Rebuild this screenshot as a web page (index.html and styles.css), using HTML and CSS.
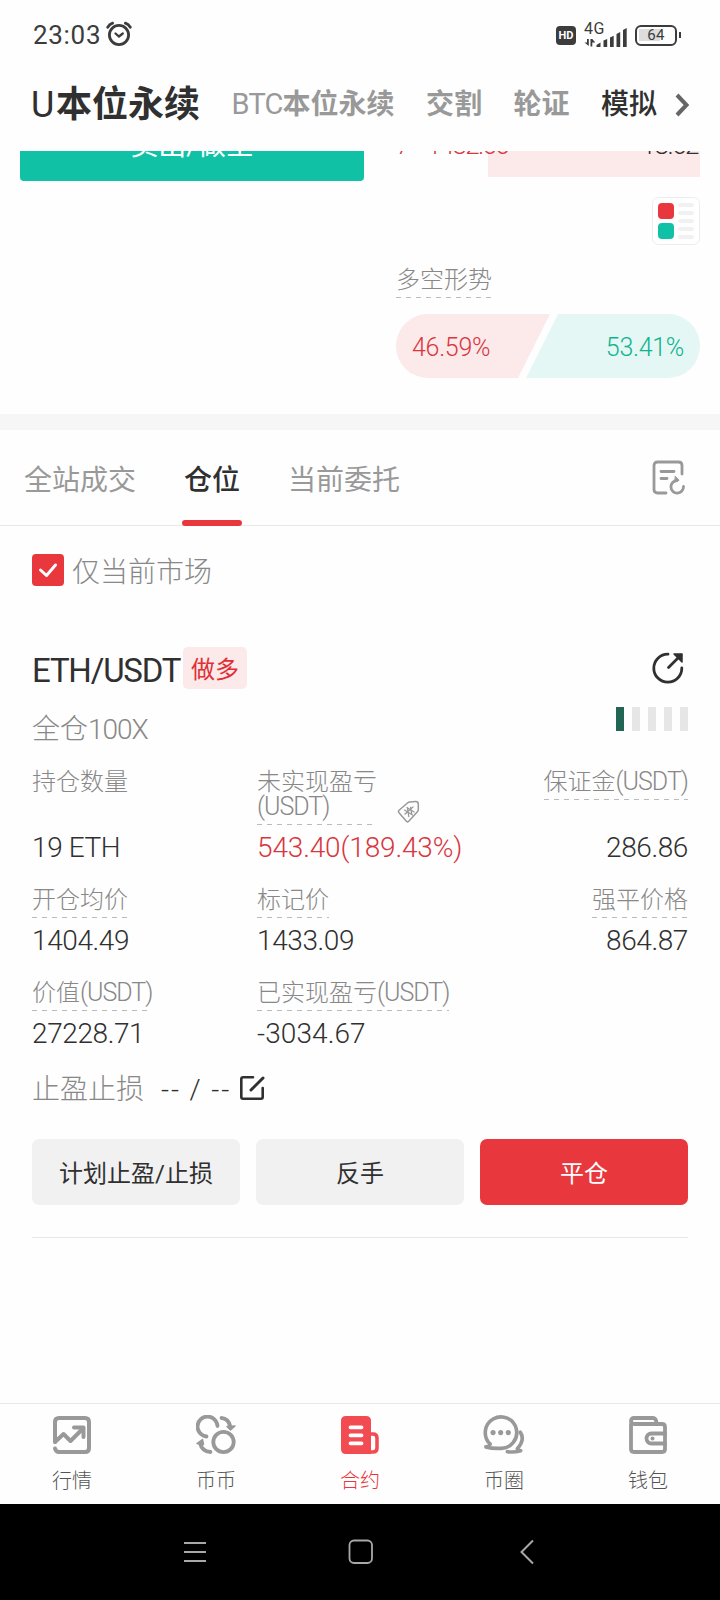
FILE: index.html
```html
<!DOCTYPE html>
<html lang="zh-CN">
<head>
<meta charset="utf-8">
<title>U本位永续</title>
<link rel="stylesheet" href="styles.css">
</head>
<body>
<div class="phone">
  <header class="status">
    <span class="clock">23:03</span>
    <svg class="alarm" width="26" height="26" viewBox="0 0 26 26" fill="none" stroke="#3c3c3c" stroke-width="2.8" stroke-linecap="round"><circle cx="13" cy="14" r="9.6"/><path d="M1.700 6.200Q3.500 3.200 6.600 2.200M19.400 2.200Q22.500 3.200 24.300 6.200"/><path d="M9.500 12.500l3.500 3 3.800-3" stroke-width="2.300"/></svg>
    <span class="hd">HD</span>
    <span class="signal">
      <svg width="44" height="25" viewBox="0 0 44 25" fill="#3c3c3c"><path d="M3 16h1.800v7L.5 19.500H3zM6.500 23.500v-7.500h1.800l3 3.500H8.300v4z"/><path d="M12.500 24v-2l4-2.500V24zM19.500 24v-6.500l3.700-1.500v8zM26 24V14.500l3.700-1.800V24zM32.500 24V11l3.700-2v15zM39 24V7l3.700-2v19z"/></svg>
      <span class="net">4G</span>
    </span>
    <span class="battery"><span class="level">64</span></span>
  </header>

  <nav class="markets">
    <span class="market current"><span class="lat">U</span>本位永续</span>
    <span class="market btc"><span class="lat">BTC</span>本位永续</span>
    <span class="market">交割</span>
    <span class="market">轮证</span>
    <span class="market demo">模拟</span>
    <svg class="more" width="16" height="26" viewBox="0 0 16 26" fill="none" stroke="#666" stroke-width="4"><path d="M2 3l9.500 10L2 23"/></svg>
  </nav>

  <section class="trade">
    <div class="sell">卖出/做空</div>
    <div class="book">
      <div class="ask"><span class="idx">7</span><span class="price">1432.66</span><span class="qty">18.62</span></div>
      <svg class="depth" width="48" height="48" viewBox="0 0 48 48"><rect x=".5" y=".5" width="47" height="47" rx="6" fill="#fff" stroke="#ececec"/><rect x="6" y="6" width="16" height="16" rx="4" fill="#e9383d"/><rect x="6" y="26" width="16" height="16" rx="4" fill="#11c1a5"/><path d="M28 8h12M28 16h12M28 24h12M28 32h12M28 40h12" stroke="#f1f1f1" stroke-width="4" stroke-linecap="round"/></svg>
      <div class="dash trend">多空形势</div>
      <div class="ratio"><span class="long">46.59%</span><span class="short">53.41%</span></div>
    </div>
  </section>

  <nav class="tabs">
    <span class="tab">全站成交</span>
    <span class="tab active">仓位</span>
    <span class="tab">当前委托</span>
    <svg class="history" width="34" height="36" viewBox="0 0 34 36" fill="none" stroke="#999" stroke-width="2.800" stroke-linecap="round" stroke-linejoin="round"><path d="M14 33H5.500Q2 33 2 29.500V5.500Q2 2 5.500 2h21Q30 2 30 5.500V14"/><path d="M9 11.500h13M9 18.500h6"/><path d="M31.500 26.500a6.300 6.300 0 1 1-6.500-6"/><path d="M23.500 16.500l3.500 3.800-4 1.500z" fill="#999" stroke-width="1"/></svg>
  </nav>

  <main class="positions">
    <label class="filter">
      <span class="check"><svg width="20" height="16" viewBox="0 0 20 16" fill="none" stroke="#fff" stroke-width="3" stroke-linecap="round" stroke-linejoin="round"><path d="M2.500 8l6 5.500 9-10.500"/></svg></span>
      仅当前市场
    </label>

    <article class="card">
      <div class="head">
        <h2 class="pair">ETH/USDT</h2>
        <span class="side">做多</span>
        <svg class="share" width="34" height="34" viewBox="0 0 34 34" fill="none" stroke="#303030" stroke-width="2.800" stroke-linecap="round" stroke-linejoin="round"><path d="M17 3.200a14 14 0 1 0 13.800 13.800"/><path d="M17.500 16.500L30 4"/><path d="M23 3h8v8z" fill="#303030" stroke-width="1.500"/></svg>
      </div>
      <div class="sub">
        <span class="lever">全仓<span class="lat">100X</span></span>
        <span class="risk"><i class="on"></i><i></i><i></i><i></i><i></i></span>
      </div>
      <div class="grid first">
        <div class="cell"><span class="label">持仓数量</span><span class="value">19 ETH</span></div>
        <div class="cell pnl">
          <span class="wrap"><span class="label dash two">未实现盈亏<br><span class="lat">(USDT)</span></span>
          <svg width="24" height="24" viewBox="0 0 24 24" fill="none" stroke="#999" stroke-width="1.500" stroke-linejoin="round" stroke-linecap="round"><path d="M1.800 10.500L10.500 3q1-.9 2.300-1l5.700-.4q2.700-.1 2.800 2.500v5.400q0 1.300-.9 2.200L11.500 21.500q-1 .8-1.900 0L1.800 12.500q-.8-1 0-2z"/><path d="M7.500 10l8 5M10 7.500l7 4.500M11.800 16.500l-1.300-8M14.800 14.500l-1.200-7M8 14l8-7" stroke-width="1.300"/></svg></span>
          <span class="value up">543.40(189.43%)</span>
        </div>
        <div class="cell end"><span class="label dash">保证金<span class="lat">(USDT)</span></span><span class="value">286.86</span></div>
      </div>
      <div class="grid">
        <div class="cell"><span class="label dash">开仓均价</span><span class="value">1404.49</span></div>
        <div class="cell"><span class="label dash">标记价</span><span class="value">1433.09</span></div>
        <div class="cell end"><span class="label dash">强平价格</span><span class="value">864.87</span></div>
      </div>
      <div class="grid">
        <div class="cell"><span class="label dash">价值<span class="lat">(USDT)</span></span><span class="value">27228.71</span></div>
        <div class="cell"><span class="label dash">已实现盈亏<span class="lat">(USDT)</span></span><span class="value loss">-3034.67</span></div>
      </div>
      <div class="stops">
        <span>止盈止损</span><span class="none">-- / --</span>
        <svg width="26" height="26" viewBox="0 0 26 26" fill="none" stroke="#303030" stroke-width="2.600" stroke-linecap="round" stroke-linejoin="round"><path d="M14 2.300H4Q2.300 2.300 2.300 4v18q0 1.700 1.700 1.700h18q1.700 0 1.700-1.700V13"/><path d="M12 15L24 3" stroke-width="3"/></svg>
      </div>
      <div class="actions">
        <button class="btn">计划止盈/止损</button>
        <button class="btn">反手</button>
        <button class="btn close">平仓</button>
      </div>
    </article>
  </main>

  <nav class="bottom">
    <a class="item"><svg width="40" height="40" viewBox="0 0 40 40" fill="none" stroke="#999" stroke-width="4" stroke-linecap="round" stroke-linejoin="round"><path d="M3 27V7q0-4 4-4h26q4 0 4 4v26q0 4-4 4H7q-3 0-4-3.500"/><path d="M3 27l8.500-8 7 7L31 13.500"/><path d="M22 12.500h9.500V22"/></svg><span>行情</span></a>
    <a class="item"><svg width="40" height="40" viewBox="0 0 40 40" fill="none" stroke="#999" stroke-width="3.800" stroke-linecap="round"><path d="M10.500 21.500A10 10 0 1 1 21.500 11"/><circle cx="27.500" cy="27" r="10.200"/><path d="M25.500 3q7 .5 9 9M4 28q2 8.500 10.500 9"/><path d="M31 11.500l8-.5-4.500 4zM1 28.500l5.500-4 1 5z" fill="#999" stroke-width="1.500" stroke-linejoin="round"/></svg><span>币币</span></a>
    <a class="item on"><svg width="40" height="40" viewBox="0 0 40 40" fill="none" stroke-linecap="round"><path d="M28 19h5q4 0 4 4v10q0 4-4 4h-5z" stroke="#f24b51" stroke-width="3.500"/><path d="M6 1h20q5 0 5 5v33H6q-5 0-5-5V6q0-5 5-5z" fill="#f24b51"/><path d="M10.500 12.300h11M10.500 20.300h11M10.500 28.300h11" stroke="#fff" stroke-width="3.800"/></svg><span>合约</span></a>
    <a class="item"><svg width="46" height="42" viewBox="0 0 46 42" fill="none" stroke="#999" stroke-width="3.800" stroke-linecap="round" stroke-linejoin="round"><path d="M4 33.500q3.500-.5 4.500-3A16.500 16.500 0 1 1 19 35q-8 .5-15-1.500"/><path d="M40 18q5.500 8-3 17.500 1.500 1.500 3.500 2-7 2-14 1"/><g fill="#999" stroke="none"><circle cx="11.500" cy="18.500" r="2.700"/><circle cx="19.500" cy="18.500" r="2.700"/><circle cx="27.500" cy="18.500" r="2.700"/></g></svg><span>币圈</span></a>
    <a class="item"><svg width="40" height="40" viewBox="0 0 40 40" fill="none" stroke="#999" stroke-width="3.800" stroke-linejoin="round" stroke-linecap="round"><path d="M3 9V34q0 3 3 3h28q3 0 3-3V12q0-3-3-3H6Q3 9 3 6q0-3 3-3h19q3 0 3.500 5"/><path d="M37 18.500H23.500a5 5 0 0 0 0 10H37"/><circle cx="24.500" cy="23.500" r="2" fill="#999" stroke="none"/></svg><span>钱包</span></a>
  </nav>

  <footer class="system">
    <svg width="24" height="24" viewBox="0 0 24 24" stroke="#a8a8a8" stroke-width="1.800"><path d="M1 3h22M1 12h22M1 21h22"/></svg>
    <svg width="26" height="26" viewBox="0 0 26 26" fill="none" stroke="#a8a8a8" stroke-width="1.800"><rect x="1.500" y="1.500" width="22.500" height="22.500" rx="4.500"/></svg>
    <svg class="back" width="16" height="26" viewBox="0 0 16 26" fill="none" stroke="#a8a8a8" stroke-width="2"><path d="M14 1.500L2.500 13 14 24.500"/></svg>
  </footer>
</div>
</body>
</html>
```
FILE: styles.css
```css
* { box-sizing: border-box; }
body { margin: 0; background: #fff; }
.phone {
  width: 720px; height: 1600px; overflow: hidden;
  display: flex; flex-direction: column;
  font-family: Roboto, "Noto Sans CJK SC", sans-serif;
  color: #303030; background: #fefefe;
}
svg { display: block; flex: none; }
span, h2, a, div, label { white-space: nowrap; }

.status { height: 68px; flex: none; display: flex; align-items: center; padding: 2px 38px 0 33px; color: #3c3c3c; }
.clock { font-size: 26px; line-height: 32px; letter-spacing: .7px; width: 73px; }
.alarm { margin-bottom: 2px; }
.hd { margin-left: auto; width: 20px; height: 19px; border-radius: 4px; background: #3c3c3c; color: #fff; font-size: 11px; font-weight: 700; line-height: 19px; text-align: center; }
.signal { position: relative; margin-left: 8px; width: 44px; height: 25px; }
.net { position: absolute; left: 0; top: -2px; font-size: 16px; line-height: 15px; letter-spacing: .4px; }
.battery { position: relative; margin: 0 5px 0 7px; width: 42px; height: 21px; border: 2.500px solid #3c3c3c; border-radius: 6px; padding: 2px; }
.battery::after { content: ""; position: absolute; right: -6px; top: 5px; width: 2px; height: 6px; background: #3c3c3c; }
.level { display: block; height: 12px; line-height: 13px; text-align: center; font-size: 15px; letter-spacing: .4px; background: linear-gradient(90deg, #ddd 62%, transparent 62%); }

.markets { height: 83px; flex: none; display: flex; align-items: center; padding: 0 32px 10px 31px; color: #999; font-size: 28px; font-weight: 700; line-height: 40px; }
.market { margin-right: 31.500px; }
.market .lat { font-weight: 400; }
.current { color: #303030; font-size: 36px; }
.current .lat { display: inline-block; width: 25px; }
.btc .lat { display: inline-block; width: 51px; font-size: 29px; letter-spacing: -.8px; }
.demo { color: #303030; font-weight: 500; margin-right: 18px; }

.trade { height: 263px; flex: none; overflow: hidden; display: flex; justify-content: space-between; padding: 0 20px; }
.sell { margin-top: -42px; width: 344px; height: 72px; border-radius: 4px; background: #11c1a5; color: #fff; font-size: 28px; line-height: 74px; text-align: center; }
.book { width: 304px; display: flex; flex-direction: column; align-items: flex-start; }
.ask { margin-top: -34px; height: 60px; width: 304px; display: flex; font-size: 26px; font-weight: 300; line-height: 57px; background: linear-gradient(90deg, transparent 92px, #fce9ea 92px); }
.idx, .price { color: #d9363e; }
.idx { width: 31px; }
.qty { margin-left: auto; padding-right: 2px; letter-spacing: -1.500px; }
.price { letter-spacing: -1.700px; }
.depth { margin-top: 20px; align-self: flex-end; }
.dash { padding-bottom: 2px; background: repeating-linear-gradient(90deg, #bbb 0 5px, transparent 5px 10px) left bottom / 100% 1.500px no-repeat; }
.trend { margin-top: 18px; height: 35px; font-size: 24px; line-height: 34px; font-weight: 300; color: #888; }
.ratio { margin-top: 16px; width: 304px; height: 64px; border-radius: 32px; overflow: hidden; display: flex; font-size: 25px; line-height: 68px; font-weight: 300; letter-spacing: -.3px; }
.long { width: 154px; padding-left: 16px; color: #d9363e; background: #fce9ea; clip-path: polygon(0 0, 100% 0, 122px 100%, 0 100%); }
.short { flex: 1; margin-left: -24px; padding-right: 16px; text-align: right; color: #0fb38f; background: #e4f7f5; clip-path: polygon(32px 0, 100% 0, 100% 100%, 0 100%); }

.tabs { height: 112px; flex: none; border-top: 16px solid #f6f6f6; border-bottom: 1px solid #e8e8e8; padding: 0 34px 0 24px; display: flex; align-items: stretch; gap: 46px; font-size: 28px; line-height: 101px; color: #999; }
.tab { position: relative; }
.active { color: #303030; font-weight: 500; padding: 0 2px; }
.active::after { content: ""; position: absolute; left: 0; right: 0; bottom: -1px; height: 6px; border-radius: 3px; background: #e9383d; z-index: 1; }
.history { margin: 30px 0 0 auto; }

.positions { flex: 1; padding: 28px 32px 0; }
.filter { display: flex; gap: 8px; height: 32px; font-size: 28px; line-height: 37px; color: #888; font-weight: 300; }
.check { width: 32px; height: 32px; border-radius: 4px; background: #e9383d; display: flex; align-items: center; justify-content: center; }
.card { margin-top: 61px; height: 591px; border-bottom: 1px solid #e8e8e8; }
.head { display: flex; height: 42px; align-items: center; }
.pair { margin: 5px 0 0; width: 151px; font-size: 33px; line-height: 42px; font-weight: 400; letter-spacing: -1.200px; }
.side { width: 64px; height: 42px; border-radius: 5px; background: #fce9ea; color: #e02f35; font-size: 24px; line-height: 46px; text-align: center; }
.share { margin: 0 3px 0 auto; }
.sub { display: flex; justify-content: space-between; height: 76px; padding-top: 18px; color: #888; font-weight: 300; }
.lever { font-size: 28px; line-height: 46px; }
.lever .lat { letter-spacing: -1px; }
.risk { display: flex; gap: 8px; }
.risk i { width: 8px; height: 24px; background: #e6e6e6; }
.risk .on { background: #216654; }

.grid { display: grid; grid-template-columns: 225px 225px 206px; height: 93px; }
.first { height: 118px; }
.cell { display: flex; flex-direction: column; align-items: flex-start; justify-content: space-between; padding-bottom: 18px; }
.end { align-items: flex-end; }
.label { height: 35px; font-size: 24px; line-height: 34px; font-weight: 300; color: #888; }
.label .lat { font-size: 25px; letter-spacing: -1px; }
.value { font-size: 28px; line-height: 34px; font-weight: 300; letter-spacing: -.4px; }
.up { color: #d9363e; letter-spacing: -.15px; }
.loss { letter-spacing: .1px; }
.wrap { display: flex; align-items: flex-end; }
.wrap svg { margin: 0 0 1px 20px; }
.two { height: 60px; width: 120px; line-height: 24.500px; padding-top: 5px; background-size: 115px 1.500px; }
.stops { display: flex; align-items: center; height: 41px; font-size: 28px; line-height: 40px; font-weight: 300; color: #888; }
.none { width: 78px; margin-left: 17px; color: #303030; letter-spacing: 1.900px; }
.stops svg { margin: 0 0 4px 0; }
.actions { display: flex; gap: 16px; margin-top: 29px; }
.btn { flex: 1; height: 66px; border: 0; border-radius: 7px; padding: 4px 0 0; background: #f1f1f1; color: #303030; font: 400 24px/34px Roboto, "Noto Sans CJK SC", sans-serif; }
.close { background: #e9383d; color: #fff; }

.bottom { height: 101px; flex: none; border-top: 1px solid #e8e8e8; display: flex; }
.item { width: 144px; padding-top: 11px; display: flex; flex-direction: column; align-items: center; font-size: 20px; line-height: 30px; font-weight: 300; color: #555; }
.item svg { height: 40px; }
.item span { margin-top: 11px; }
.item.on { color: #e9383d; }
.system { height: 96px; flex: none; background: #000; display: flex; align-items: center; gap: 141px; padding: 0 0 0 183px; }
.back { margin-left: 4px; }
```
